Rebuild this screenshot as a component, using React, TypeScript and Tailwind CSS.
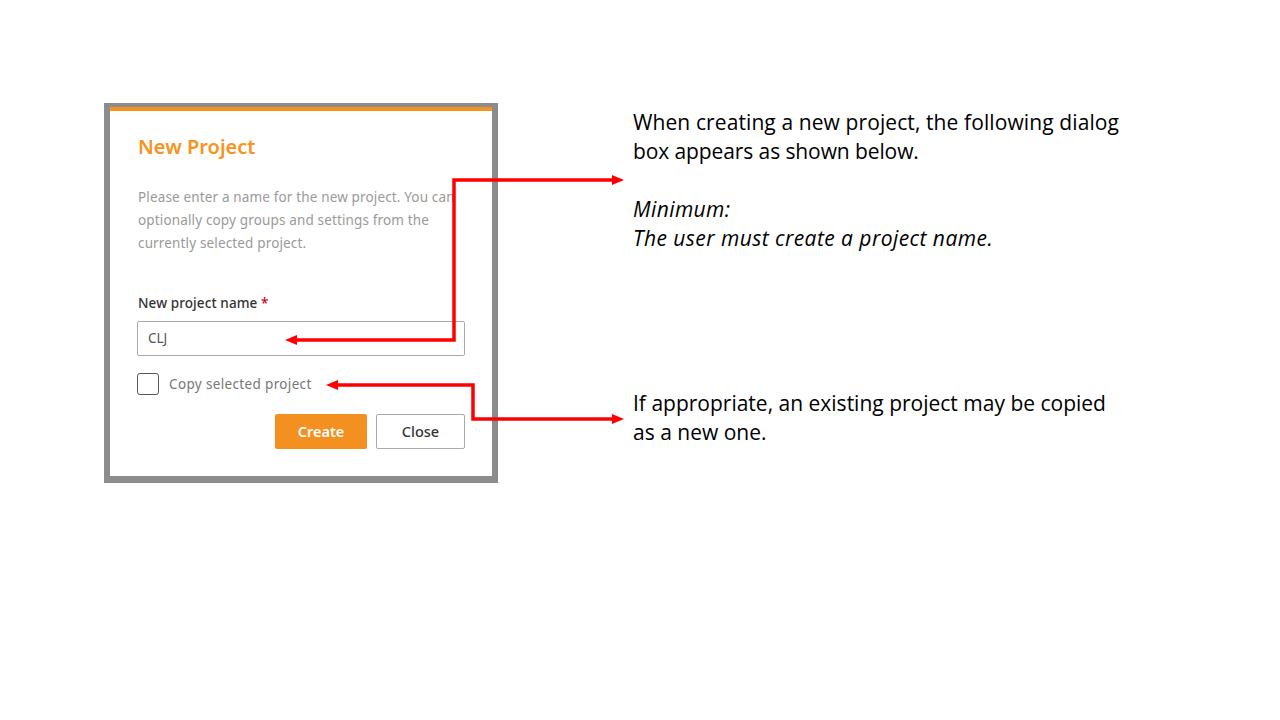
import React from "react";

export default function App() {
  return (
    <div className="relative w-[1280px] h-[720px] bg-white overflow-hidden">
      <div className="flex">
        {/* Dialog screenshot */}
        <div className="ml-[104px] mt-[103px] w-[394px] h-[380px] bg-[#8c8c8c] pl-[6px] pt-[4px] pr-[6px] pb-[7px]">
          <div className="w-[382px] h-[369px] bg-white border-t-[4px] border-[#f7931e] px-[27px] pt-[22px]" style={{ fontFamily: '"Noto Sans", sans-serif' }}>
            <div className="pl-[1px] text-[20px] leading-[28px] font-semibold text-[#f7931e]">New Project</div>
            <div className="pl-[1px] mt-[25px] text-[13.5px] leading-[23px] text-[#9a9a9a] whitespace-nowrap tracking-[0.15px]">
              Please enter a name for the new project. You can
              <br />
              optionally copy groups and settings from the
              <br />
              currently selected project.
            </div>
            <div className="pl-[1px] mt-[39px] text-[13.5px] leading-[18px] font-medium text-[#333] tracking-[0.1px]">
              New project name <span className="text-[#d0021b]">*</span>
            </div>
            <div className="mt-[9px] h-[35px] border border-[#aaaaaa] rounded-[2px] flex items-center px-[10px] text-[13.5px] text-[#555]">
              CLJ
            </div>
            <div className="mt-[17px] flex items-center gap-[10px] h-[22px]">
              <div className="w-[22px] h-[22px] border-[1.5px] border-[#555] rounded-[3px]" />
              <span className="text-[13.5px] text-[#777] tracking-[0.35px]">Copy selected project</span>
            </div>
            <div className="mt-[19px] flex justify-end gap-[9px]">
              <button className="w-[92px] h-[35px] bg-[#f39020] text-white text-[14.5px] font-semibold rounded-[2px]">Create</button>
              <button className="w-[89px] h-[35px] bg-white border border-[#aaaaaa] text-[#333] text-[14.5px] font-medium rounded-[2px]">Close</button>
            </div>
          </div>
        </div>

        {/* Annotations */}
        <div className="ml-[135px] text-[21px] leading-[29px] text-black" style={{ fontFamily: '"Open Sans", "Noto Sans", sans-serif' }}>
          <div className="mt-[108px] whitespace-nowrap">
            <div className="tracking-[0.1px]">When creating a new project, the following dialog</div>
            <div className="tracking-[-0.1px]">box appears as shown below.</div>
            <div>&nbsp;</div>
            <div className="italic tracking-[0.4px]">Minimum:</div>
            <div className="italic tracking-[0.45px]">The user must create a project name.</div>
          </div>
          <div className="mt-[136px] whitespace-nowrap">
            <div>If appropriate, an existing project may be copied</div>
            <div>as a new one.</div>
          </div>
        </div>
      </div>

      <svg className="absolute inset-0 pointer-events-none" width="1280" height="720" viewBox="0 0 1280 720">
        <polyline points="296,340 454,340 454,180 613,180" fill="none" stroke="#ff0000" strokeWidth="3.5" />
        <polygon points="285,340 297,335 297,345" fill="#ff0000" />
        <polygon points="624,180 612,175 612,185" fill="#ff0000" />
        <polyline points="337,385 473,385 473,419 613,419" fill="none" stroke="#ff0000" strokeWidth="3.5" />
        <polygon points="326,385 338,380 338,390" fill="#ff0000" />
        <polygon points="624,419 612,414 612,424" fill="#ff0000" />
      </svg>
    </div>
  );
}
